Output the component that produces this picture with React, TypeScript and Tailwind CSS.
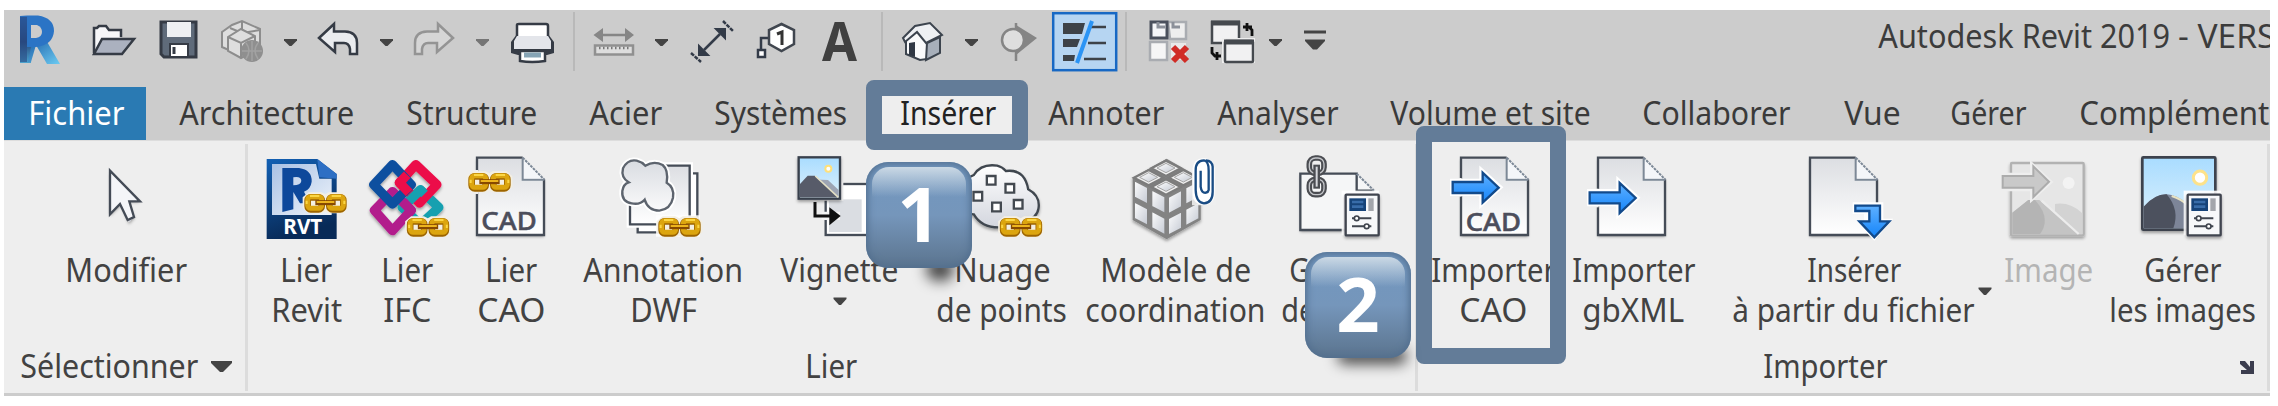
import { useLayoutEffect, useRef, useState, type ReactNode } from "react";

const FONT = "font-['Noto_Sans','Open_Sans',sans-serif]";

/* Text squeezed or stretched horizontally to fill the width given in its class. */
function Fit({ className = "", children }: { className?: string; children: ReactNode }) {
  const outer = useRef<HTMLSpanElement>(null);
  const inner = useRef<HTMLSpanElement>(null);
  const [scale, setScale] = useState(1);
  useLayoutEffect(() => {
    if (outer.current && inner.current) {
      setScale(outer.current.clientWidth / inner.current.offsetWidth);
    }
  }, []);
  return (
    <span ref={outer} className={`block h-10 shrink-0 whitespace-nowrap leading-10 ${className}`}>
      <span ref={inner} className="inline-block origin-left" style={{ transform: `translateX(1.3px) scaleX(${scale})` }}>
        {children}
      </span>
    </span>
  );
}

/* Drawing with its own coordinate window; k = drawing units per pixel. */
function Pic({ x, y, w, h, k = 1, children }: { x: number; y: number; w: number; h: number; k?: number; children: ReactNode }) {
  return (
    <svg className="block shrink-0" width={w / k} height={h / k} viewBox={`${x} ${y} ${w} ${h}`}>
      {children}
    </svg>
  );
}

function Q({ x, w, children }: { x: number; w: number; children: ReactNode }) {
  return <Pic x={x} y={10} w={w} h={64}>{children}</Pic>;
}

function Big({ x, y = 36, children }: { x: number; y?: number; children: ReactNode }) {
  return <Pic x={x} y={y} w={288} h={288} k={3}>{children}</Pic>;
}

function Caret({ dim = false }: { dim?: boolean }) {
  return (
    <svg className="block shrink-0" width="36" height="64" viewBox="0 0 36 64">
      <path d="M12 29h13v1.500l-5.500 5.500h-2l-5.500-5.500z" fill={dim ? "#757575" : "#444"} />
    </svg>
  );
}

function Rule({ x, w, at }: { x: number; w: number; at: number }) {
  return <Q x={x} w={w}><path d={`M${at} 12v59`} stroke="#b9b9b9" strokeWidth="2" /></Q>;
}

function Chain({ x, y }: { x: number; y: number }) {
  return (
    <g transform={`translate(${x} ${y})`} fill="none">
      <path d="M14 -1H52L64 5L74 -1H116L133 14V46L116 62H72L64 57L52 62H14L-4 46V14Z" fill="#f4efe2" />
      <rect x="11" y="14" width="42" height="36" rx="9" stroke="#9d6500" strokeWidth="20" />
      <rect x="76" y="14" width="42" height="36" rx="9" stroke="#9d6500" strokeWidth="20" />
      <rect x="11" y="12" width="42" height="35" rx="9" stroke="#dca50f" strokeWidth="15" />
      <rect x="76" y="12" width="42" height="35" rx="9" stroke="#dca50f" strokeWidth="15" />
      <path d="M18 10H46M83 10H111M8 24V34M121 24V34" stroke="#fbd645" strokeWidth="6" />
      <path d="M34 30H95" stroke="#874900" strokeWidth="15" />
      <path d="M38 28H91" stroke="#edb51e" strokeWidth="6" />
    </g>
  );
}

function Grads() {
  return (
    <svg width="0" height="0" className="absolute">
      <defs>
        <linearGradient id="paper" x1="0" y1="0" x2="0" y2="1"><stop offset="0" stopColor="#dcdee2" /><stop offset="1" stopColor="#fff" /></linearGradient>
        <linearGradient id="silver" x1="0" y1="0" x2="1" y2="1"><stop offset="0" stopColor="#fff" /><stop offset="1" stopColor="#c3c8d2" /></linearGradient>
        <linearGradient id="cloud" x1="0" y1="0" x2="0" y2="1"><stop offset="0" stopColor="#fff" /><stop offset="1" stopColor="#d3d6de" /></linearGradient>
        <linearGradient id="puff" x1="0" y1="0" x2="0" y2="1"><stop offset="0" stopColor="#d9dce1" /><stop offset="1" stopColor="#fafafb" /></linearGradient>
        <linearGradient id="sky" x1="0" y1="0" x2="0" y2="1"><stop offset="0" stopColor="#a9dcff" /><stop offset="1" stopColor="#dff2fc" /></linearGradient>
        <linearGradient id="rvt" x1="0" y1="0" x2="0.3" y2="1"><stop offset="0" stopColor="#1260b4" /><stop offset="1" stopColor="#082a57" /></linearGradient>
        <linearGradient id="rvtpage" x1="0" y1="0" x2="1" y2="1"><stop offset="0" stopColor="#a9c1e4" /><stop offset="1" stopColor="#eef4fb" /></linearGradient>
        <linearGradient id="blue" x1="0" y1="0" x2="0" y2="1"><stop offset="0" stopColor="#5eb0ff" /><stop offset="1" stopColor="#1585fa" /></linearGradient>
        <linearGradient id="leg" x1="0" y1="0" x2="1" y2="1"><stop offset="0" stopColor="#1c5fa8" /><stop offset="1" stopColor="#6ccbf2" /></linearGradient>
        <linearGradient id="stem" x1="0" y1="0" x2="0" y2="1"><stop offset="0" stopColor="#2a6fbe" /><stop offset="0.55" stopColor="#26477c" /><stop offset="1" stopColor="#4ba3cf" /></linearGradient>
        <filter id="drop" x="-20%" y="-20%" width="140%" height="150%"><feDropShadow dx="0" dy="6" stdDeviation="4" floodOpacity="0.35" /></filter>
      </defs>
    </svg>
  );
}

/* Folded-corner sheet, 206 x 236. */
function Sheet({ x, y }: { x: number; y: number }) {
  return (
    <g transform={`translate(${x} ${y})`}>
      <path d="M3 4H140L204 68V234H3Z" fill="url(#paper)" filter="url(#drop)" />
      <path d="M204 68V235H3V3H140" fill="none" stroke="#454c57" strokeWidth="7" />
      <path d="M140 3V69H205" fill="#f6f7f9" stroke="#7c8896" strokeWidth="6" />
      <path d="M140 3L205 69" stroke="#7c8896" strokeWidth="6" strokeDasharray="8 3" />
      <path d="M144 14L195 65H144Z" fill="#f4f6f9" />
    </g>
  );
}

function CadText({ x, y }: { x: number; y: number }) {
  return <text x={x} y={y} fontSize="75" textLength="166" lengthAdjust="spacingAndGlyphs" fontWeight="500" fill="#4c4e5c" stroke="#4c4e5c" strokeWidth="1.5" fontFamily="Noto Sans, sans-serif">CAD</text>;
}

function Arrow({ x, y }: { x: number; y: number }) {
  return (
    <g transform={`translate(${x} ${y})`}>
      <path d="M2 33H90V2L145 52L90 102V71H2Z" fill="#fff" stroke="#fff" strokeWidth="14" />
      <path d="M3 36H93V8L141 53L93 98V69H3Z" fill="url(#blue)" stroke="#124a8b" strokeWidth="7" />
    </g>
  );
}

function Props({ x, y }: { x: number; y: number }) {
  return (
    <g transform={`translate(${x} ${y})`}>
      <rect x="-9" y="-9" width="112" height="134" fill="#fff" opacity="0.9" />
      <rect x="3" y="3" width="99" height="122" rx="2" fill="#f7f8fa" stroke="#40454f" strokeWidth="7" filter="url(#drop)" />
      <rect x="14" y="14" width="50" height="38" fill="#164379" />
      <path d="M22 25H56M22 39H56" stroke="#386ca9" strokeWidth="8" />
      <rect x="71" y="14" width="16" height="38" fill="#a3a6ac" />
      <path d="M22 74H80M22 98H80" stroke="#40454f" strokeWidth="6" />
      <circle cx="36" cy="74" r="7" fill="#fff" stroke="#40454f" strokeWidth="5" />
      <circle cx="66" cy="98" r="7" fill="#fff" stroke="#40454f" strokeWidth="5" />
    </g>
  );
}

function Cube() {
  const faces: ReactNode[] = [];
  for (const r of [0, 1]) {
    for (const c of [0, 1]) {
      const tx = 198 + (c - r) * 52;
      const ty = 58 + (c + r) * 28;
      faces.push(<path key={`t${r}${c}`} d={`M${tx} ${ty + 4}l44 23l-44 23l-44-23z`} fill="#efefef" stroke="#7c7c7c" strokeWidth="7" />);
      faces.push(<path key={`u${r}${c}`} d={`M${tx} ${ty + 12}l27 14l-27 14l-27-14z`} fill="url(#silver)" stroke="#a4a4a4" strokeWidth="3" />);
      const lx = 98 + c * 52;
      const ly = 116 + c * 28 + r * 64;
      faces.push(<path key={`l${r}${c}`} d={`M${lx + 4} ${ly + 4}l42 22v52l-42-22z`} fill="url(#silver)" stroke="#838383" strokeWidth="6" />);
      const rx = 200 + c * 52;
      const ry = 172 - c * 28 + r * 64;
      faces.push(<path key={`r${r}${c}`} d={`M${rx + 4} ${ry - 1}l42-22v52l-42 22z`} fill="url(#silver)" stroke="#838383" strokeWidth="6" />);
    }
  }
  return <g filter="url(#drop)"><path d="M200 56L302 114V240L200 298L98 240V114Z" fill="#838383" />{faces}</g>;
}

function QuickAccess() {
  return (
    <div className="flex h-16 overflow-hidden">
      <Q x={4} w={76}>
        <path d="M20 16h11v47h-11z" fill="url(#stem)" />
        <path d="M32 42L46 40L60 64H47L36 45L31 62H28Z" fill="url(#leg)" />
        <path d="M20 15.500H38Q54 18 54 31Q53 45 36 47H27V16Z" fill="#2b74c5" />
        <path d="M31 25H37Q42 27 42 32Q42 37 36 38H31Z" fill="#ccc" />
        <path d="M20 17H27V62H20Z" fill="#294a82" opacity="0.6" />
      </Q>
      <Q x={80} w={68}>
        <path d="M94 53V28H97L99 26H106L109 30H121V37" fill="#f6f6f8" stroke="#353b45" strokeWidth="2.500" />
        <path d="M94 54L102 39H134L122 54Z" fill="#abb1bf" stroke="#353b45" strokeWidth="2.500" />
      </Q>
      <Q x={148} w={60}>
        <path d="M161 22H196V57H164L161 54Z" fill="#5f6b7a" stroke="#353b45" strokeWidth="3" />
        <rect x="167" y="22" width="24" height="15" fill="#eef0f3" />
        <path d="M170 56V44H188V56" fill="#fff" stroke="#353b45" strokeWidth="2" />
        <path d="M174 47V54" stroke="#353b45" strokeWidth="3" />
      </Q>
      <Q x={208} w={64}>
        <g fill="#dedede" stroke="#8d8d8d" strokeWidth="2">
          <path d="M222 32L232 25L242 21L260 29V46L242 56L222 47Z" />
          <path d="M230 28L242 33V22M242 33L260 30" fill="none" />
          <path d="M228 37L241 29L255 36V51L241 58L228 51Z" />
          <path d="M228 37L241 43L255 36M241 43V58" fill="none" />
        </g>
        <circle cx="252" cy="51" r="11" fill="#8f8f8f" />
        <path d="M242 51H262M252 41V61M246 43Q252 50 246 59M258 43Q252 50 258 59" fill="none" stroke="#a2a2a2" strokeWidth="1.500" />
      </Q>
      <Caret />
      <Q x={308} w={60}>
        <path d="M319 38L334 24V31.500H345Q357 32 357 43V54H350V49Q349 43 344 43H335V52Z" fill="#eaecef" stroke="#353b45" strokeWidth="2.500" />
      </Q>
      <Caret />
      <Q x={404} w={60}>
        <path d="M453 38L438 24V31.500H427Q415 32 415 43V54H422V49Q423 43 428 43H437V52Z" fill="#d6d6d6" stroke="#949494" strokeWidth="2.500" />
      </Q>
      <Caret dim />
      <Q x={500} w={66}>
        <path d="M511 42L517 34H548L554 42V53L547 55H518L511 53Z" fill="#353b45" />
        <path d="M517 37V25Q517 24 519 24H546Q548 24 548 26V37" fill="#fff" stroke="#353b45" strokeWidth="2.500" />
        <path d="M514 41L517 36H548L551 41V49H514Z" fill="#e3e5ea" />
        <path d="M520 51H545V61Q532 63 520 61Z" fill="#fff" stroke="#353b45" strokeWidth="2.500" />
        <path d="M524 55H541" stroke="#86a4b5" strokeWidth="5" />
      </Q>
      <Rule x={566} w={16} at={574} />
      <Q x={582} w={61}>
        <path d="M598 35H630" stroke="#868686" strokeWidth="2.500" />
        <path d="M593.500 35L603 28V42ZM634 35L625 28V42Z" fill="#868686" />
        <rect x="595" y="45.500" width="38" height="9" fill="#ddd" stroke="#909090" strokeWidth="2.500" />
        <path d="M599 48H631" stroke="#777" strokeWidth="2.500" strokeDasharray="1.500 2.500" />
      </Q>
      <Caret />
      <Q x={679} w={66}>
        <path d="M704 50L720 34" stroke="#333b48" strokeWidth="2.500" />
        <path d="M699 46V55H708ZM716 29H725V38Z" fill="#333b48" stroke="#333b48" strokeWidth="2" />
        <path d="M691 53L701 62M723 21L733 31" stroke="#333b48" strokeWidth="2.500" strokeDasharray="4 1" />
      </Q>
      <Q x={745} w={63}>
        <path d="M761 51V38H769" fill="none" stroke="#333b48" strokeWidth="2.500" />
        <rect x="758" y="50" width="7" height="7" fill="#fff" stroke="#333b48" strokeWidth="2.500" />
        <path d="M781.500 24L794 30V44L781.500 51L769 44V30Z" fill="#fff" stroke="#40464f" strokeWidth="2.500" />
        <path d="M777 34L782 32V45" fill="none" stroke="#333" strokeWidth="3" />
      </Q>
      <Q x={808} w={66}>
        <text x="822" y="61" fontFamily="Noto Sans, sans-serif" fontSize="53" fontWeight="700" fill="#404040" textLength="35" lengthAdjust="spacingAndGlyphs">A</text>
      </Q>
      <Rule x={874} w={16} at={882} />
      <Q x={890} w={63}>
        <path d="M906 39L918 31L927 42V59L920 60L906 54Z" fill="#f9fafb" stroke="#3c444e" strokeWidth="2" />
        <path d="M927 43L940 37V53L926 60Z" fill="#a7afba" stroke="#3c444e" strokeWidth="2" />
        <path d="M903 38L915 26L930 23L942 35L926 43L917 32L905 42Z" fill="#eef0f3" stroke="#3c444e" strokeWidth="2" />
        <path d="M909 43L915 42V57L909 55Z" fill="#303844" />
      </Q>
      <Caret />
      <Q x={989} w={59}>
        <path d="M1016 23V61" stroke="#858585" strokeWidth="2.500" />
        <path d="M1016 25L1037 38L1016 55Z" fill="#858585" />
        <circle cx="1013" cy="40" r="11" fill="#dedede" stroke="#858585" strokeWidth="2.500" />
      </Q>
      <Q x={1048} w={73}>
        <rect x="1053.200" y="13.200" width="63" height="57" fill="#b6d5f2" stroke="#1768c4" strokeWidth="2.500" />
        <path d="M1063 23H1085L1082 34H1063ZM1063 39H1080L1077 47H1063ZM1063 55H1075L1074 61H1063Z" fill="#3d4248" />
        <path d="M1091 27H1106M1088 43H1106M1084 59H1106" stroke="#3d4248" strokeWidth="2.500" />
        <path d="M1092 21L1077 63" stroke="#2b94f5" strokeWidth="4" />
      </Q>
      <Rule x={1121} w={11} at={1126} />
      <Q x={1132} w={68}>
        <path d="M1168 22H1186V39H1170Z" fill="#eee" stroke="#a9acb1" strokeWidth="2.500" />
        <path d="M1150 42H1167V60H1150Z" fill="#f6f6f6" stroke="#a9acb1" strokeWidth="2.500" />
        <path d="M1171 43H1186V60H1171Z" fill="#e9e9e9" />
        <path d="M1151 22H1167V38H1151Z" fill="#f5f6f8" stroke="#4a505c" strokeWidth="3" />
        <path d="M1158 22V27H1165M1173 22V27H1180" stroke="#8b9099" strokeWidth="3" fill="none" />
        <path d="M1173 47L1187 61M1187 47L1173 61" stroke="#d02c26" strokeWidth="6" />
      </Q>
      <Q x={1200} w={57}>
        <rect x="1212" y="22" width="27" height="21" fill="#f1f1f2" stroke="#45494e" strokeWidth="2.500" />
        <path d="M1211 23H1240" stroke="#45494e" strokeWidth="5" />
        <rect x="1222" y="38" width="33" height="25" fill="#eee" />
        <rect x="1225" y="41" width="28" height="21" rx="1" fill="#f1f1f2" stroke="#45494e" strokeWidth="2.500" />
        <path d="M1224 42H1254" stroke="#45494e" strokeWidth="5" />
        <path d="M1252 36V30L1249 27M1243 27H1252M1247 23V31" fill="none" stroke="#111" strokeWidth="2.800" />
        <path d="M1212 47V53L1215 56H1221M1217 52V60" fill="none" stroke="#111" strokeWidth="2.800" />
      </Q>
      <Caret />
      <Q x={1293} w={50}>
        <path d="M1304 32H1326" stroke="#444" strokeWidth="3" />
        <path d="M1305 39.500H1325V41L1317 49.500H1313L1305 41Z" fill="#444" />
      </Q>
      <div className="ml-[534px] flex pt-[5px] text-[33.500px] text-[#3c3c3c]">
        <Fit className="w-[292px]">Autodesk Revit 2019</Fit>
        <span className="ml-[9px] whitespace-nowrap leading-10">- VERSION</span>
      </div>
    </div>
  );
}

function Tabs() {
  return (
    <div className="mt-[13px] flex h-[53px] overflow-hidden text-[33.500px] text-[#3a3a3a]">
      <div className="flex w-[142px] shrink-0 justify-center bg-[#2a7ab3] pt-[5px] text-white"><Fit className="w-24">Fichier</Fit></div>
      <Fit className="mt-[5px] ml-8 w-[175px]">Architecture</Fit>
      <Fit className="mt-[5px] ml-[52px] w-[131px]">Structure</Fit>
      <Fit className="mt-[5px] ml-[52px] w-[73px]">Acier</Fit>
      <Fit className="mt-[5px] ml-[52px] w-[133px]">Systèmes</Fit>
      <div className="ml-[36px] flex w-[130px] shrink-0 justify-center bg-[#eee] pt-[5px] text-[#222]"><Fit className="w-24">Insérer</Fit></div>
      <Fit className="mt-[5px] ml-[35px] w-[116px]">Annoter</Fit>
      <Fit className="mt-[5px] ml-[53px] w-[121px]">Analyser</Fit>
      <Fit className="mt-[5px] ml-[52px] w-[200px]">Volume et site</Fit>
      <Fit className="mt-[5px] ml-[52px] w-[148px]">Collaborer</Fit>
      <Fit className="mt-[5px] ml-[54px] w-14">Vue</Fit>
      <Fit className="mt-[5px] ml-[50px] w-[76px]">Gérer</Fit>
      <Fit className="mt-[5px] ml-[53px] w-[205px]">Compléments</Fit>
    </div>
  );
}

function Tool({ width, icon, children }: { width: string; icon: ReactNode; children: ReactNode }) {
  return (
    <div className={`flex shrink-0 flex-col items-center ${width}`}>
      {icon}
      <div className="flex flex-col items-center pt-px">{children}</div>
    </div>
  );
}

const down = (
  <svg className="block" width="14" height="9" viewBox="0 0 14 9"><path d="M0.500 0.500H13.500V2L8 8H6L0.500 2Z" fill="#444" /></svg>
);

function Divider() {
  return <div className="mt-[3px] h-[247px] w-[3px] shrink-0 bg-[#dcdcdc]" />;
}

const PUFF = "M755 190Q724 185 727 153Q730 132 746 127Q722 112 729 85Q743 57 770 62Q786 66 796 77Q822 61 848 75Q866 90 860 128Q884 142 879 173Q872 207 838 212Q804 212 794 179Q780 195 755 190Z";

function Ribbon() {
  return (
    <div className="flex h-[253px] border-t border-[#ddd] bg-[#eee] text-[33.500px] text-[#424242]">
      <section className="flex w-[241px] shrink-0 flex-col pt-[11px]">
        <div className="flex h-[193px]">
          <Tool width="w-[242px]" icon={
            <Big x={231}>
              <path d="M330 94L420 181H384L404 228L387 247L364 190L330 222Z" fill="url(#silver)" filter="url(#drop)" />
              <path d="M330 92V223L360 192L383 240L402 231L388 184H420Z" fill="#f4f5f8" stroke="#444b56" strokeWidth="7" />
            </Big>
          }>
            <Fit className="w-[122px]">Modifier</Fit>
          </Tool>
        </div>
        <div className="flex items-center pl-[15px]">
          <Fit className="w-[178px]">Sélectionner</Fit>
          <svg className="ml-[14px] mt-1 block" width="21" height="12" viewBox="0 0 21 12"><path d="M0 0H21V2L12 11H9L0 2Z" fill="#444" /></svg>
        </div>
      </section>
      <Divider />
      <section className="flex w-[1167px] shrink-0 flex-col pt-[11px]">
        <div className="flex h-[193px] pl-[7px]">
          <Tool width="w-[100px]" icon={
            <Big x={771}>
              <path d="M800 57H952L1010 102V297H800Z" fill="url(#rvt)" />
              <path d="M816 72H948L958 116H995V225H816Z" fill="url(#rvtpage)" />
              <path d="M952 57L1010 102V116L958 112Z" fill="#2d6fc4" />
              <path d="M847 84H897Q937 90 935 125Q932 148 912 155L930 190H900L880 156V208L847 216Z" fill="#0d489b" />
              <path d="M880 112Q904 108 904 123Q902 136 880 136Z" fill="#c9d8ee" />
              <text x="850" y="281" fontSize="66" fontWeight="700" textLength="117" lengthAdjust="spacingAndGlyphs" fill="#fff" fontFamily="Noto Sans, sans-serif">RVT</text>
              <Chain x={912} y={158} />
            </Big>
          }>
            <Fit className="w-[52px]">Lier</Fit><Fit className="w-[71px]">Revit</Fit>
          </Tool>
          <Tool width="w-[101px]" icon={
            <Big x={-67.500}>
              <g fill="none" strokeWidth="28" strokeLinejoin="round" filter="url(#drop)">
                <path d="M120 150L175 202L120 254L65 202Z" stroke="#18a0b0" />
                <path d="M36 155L-18 211L36 272L92 211Z" stroke="#b21f8c" />
                <path d="M106 74L169 134L117 189L57 128Z" stroke="#ec0d49" />
                <path d="M36 74L-20 134L36 192L92 134Z" stroke="#0b4f9f" />
                <path d="M80 104L57 128L86 158" stroke="#ec0d49" />
                <path d="M68 184L92 211L76 230" stroke="#b21f8c" />
                <path d="M86 183L120 150L132 162" stroke="#18a0b0" />
              </g>
              <Chain x={78} y={230} />
            </Big>
          }>
            <Fit className="w-[52px]">Lier</Fit><Fit className="w-12">IFC</Fit>
          </Tool>
          <Tool width="w-[108px]" icon={
            <Big x={246}><Sheet x={288} y={50} /><CadText x={304} y={271} /><path d="M282 90V162" stroke="#eee" strokeWidth="24" /><Chain x={264} y={95} /></Big>
          }>
            <Fit className="w-[52px]">Lier</Fit><Fit className="w-[68px]">CAO</Fit>
          </Tool>
          <Tool width="w-[196px]" icon={
            <Big x={702}>
              <path d="M773 100H952V277H773Z" fill="#fff" stroke="#454c57" strokeWidth="7" />
              <path d="M750 77H929V253H750Z" fill="url(#paper)" stroke="#fff" strokeWidth="20" />
              <path d="M750 77H929V253H750Z" fill="url(#paper)" stroke="#454c57" strokeWidth="7" />
              <path d={PUFF} fill="#fff" stroke="#fff" strokeWidth="18" />
              <path d={PUFF} fill="url(#puff)" stroke="#5d646e" strokeWidth="7" />
              <path d="M828 226H960V290H828Z" fill="#fff" opacity="0.8" />
              <Chain x={834} y={230} />
            </Big>
          }>
            <Fit className="w-[160px]">Annotation</Fit><Fit className="w-[67px]">DWF</Fit>
          </Tool>
          <Tool width="w-[156px]" icon={
            <Big x={90}>
              <rect x="197" y="132" width="180" height="153" fill="#fff" stroke="#454c57" strokeWidth="7" />
              <rect x="207" y="178" width="98" height="98" fill="#dadde2" />
              <path d="M190 125H250V182H190ZM185 215H240V240H185Z" fill="#f4f4f4" />
              <rect x="116" y="52" width="124" height="124" fill="url(#sky)" stroke="#393f4b" strokeWidth="7" filter="url(#drop)" />
              <path d="M150 118L204 120L236 150V172H150Z" fill="#9da4b3" />
              <path d="M120 132L143 107L164 107L236 172H120Z" fill="#575b69" />
              <path d="M166 108L235 172" stroke="#e4e0c5" strokeWidth="5" />
              <circle cx="205" cy="86" r="9" fill="#fff" stroke="#ffe07a" strokeWidth="6" />
              <path d="M165 186V228H215" fill="none" stroke="#111" strokeWidth="9" />
              <path d="M208 202L242 228L208 256Z" fill="#111" />
            </Big>
          }>
            <Fit className="w-[118px]">Vignette</Fit><div className="pt-[8px] pl-[3px]">{down}</div>
          </Tool>
          <Tool width="w-[169px]" icon={
            <Big x={577.500}>
              <path d="M640 105Q662 70 710 77Q726 81 736 93Q793 86 803 148Q840 168 834 205Q830 235 790 245Q760 240 724 262Q665 266 640 223Q585 220 590 165Q595 125 640 105Z" fill="url(#cloud)" stroke="#40474f" strokeWidth="7" filter="url(#drop)" />
              <g fill="#fff" stroke="#434950" strokeWidth="7">
                <path d="M679 108h26v26h-26zM735 132h26v26h-26zM639 156h26v26h-26zM695 188h26v26h-26zM760 180h26v26h-26z" />
              </g>
              <Chain x={717} y={230} />
            </Big>
          }>
            <Fit className="w-[96px]">Nuage</Fit><Fit className="w-[131px]">de points</Fit>
          </Tool>
          <Tool width="w-[178px]" icon={
            <Big x={78}>
              <Cube />
              <path d="M276 60H350V196H276Z" fill="#eee" opacity="0.9" />
              <rect x="278" y="55" width="66" height="140" rx="30" fill="#fff" />
              <path d="M302 92V140Q304 160 318 158Q325 156 326 150V92Q326 62 312 61Q286 62 287 92V150Q288 188 312 190Q338 188 338 155V80Q336 62 318 61" fill="none" stroke="#194c84" strokeWidth="7" />
            </Big>
          }>
            <Fit className="w-[151px]">Modèle de</Fit><Fit className="w-[180px]">coordination</Fit>
          </Tool>
          <Tool width="w-[152px]" icon={
            <Big x={573}>
              <path d="M601 101H770L822 152V270H601Z" fill="url(#cloud)" filter="url(#drop)" />
              <path d="M601 101H770L822 152V270H601Z" fill="#f5f6f7" />
              <path d="M735 270H601V101H770V152H822" fill="none" stroke="#454c57" strokeWidth="7" />
              <path d="M770 101L822 152" stroke="#7c8896" strokeWidth="6" strokeDasharray="8 3" />
              <rect x="628" y="54" width="44" height="46" rx="18" fill="none" stroke="#4b4d52" strokeWidth="17" />
              <rect x="628" y="118" width="44" height="46" rx="18" fill="none" stroke="#4b4d52" strokeWidth="17" />
              <rect x="628" y="54" width="44" height="46" rx="18" fill="none" stroke="#c4c6ca" strokeWidth="4" />
              <rect x="628" y="118" width="44" height="46" rx="18" fill="none" stroke="#c4c6ca" strokeWidth="4" />
              <path d="M650 74V146" stroke="#4b4d52" strokeWidth="20" /><path d="M650 80V140" stroke="#d6d8dc" strokeWidth="6" />
              <Props x={734} y={161} />
            </Big>
          }>
            <Fit className="w-[102px]">Gestion</Fit><Fit className="w-[118px]">des liens</Fit>
          </Tool>
        </div>
        <div className="flex pl-[556px]"><Fit className="w-[52px]">Lier</Fit></div>
      </section>
      <Divider />
      <section className="flex w-[849px] shrink-0 flex-col pt-[11px]">
        <div className="flex h-[193px] pl-[2px]">
          <Tool width="w-[144px]" icon={
            <Big x={132} y={96}><Sheet x={180} y={110} /><CadText x={197} y={332} /><path d="M174 174V230" stroke="#eee" strokeWidth="22" /><Arrow x={155} y={150} /></Big>
          }>
            <Fit className="w-[124px]">Importer</Fit><Fit className="w-[68px]">CAO</Fit>
          </Tool>
          <Tool width="w-[136px]" icon={
            <Big x={552} y={96}><Sheet x={591} y={110} /><path d="M585 206V262" stroke="#eee" strokeWidth="22" /><Arrow x={566} y={181} /></Big>
          }>
            <Fit className="w-[123px]">Importer</Fit><Fit className="w-[102px]">gbXML</Fit>
          </Tool>
          <Tool width="w-[304px]" icon={
            <Big x={252}>
              <Sheet x={267} y={50} />
              <path d="M398 187H490V236H520L463 302L432 270V222H398Z" fill="#fff" />
              <path d="M406 197H480V244H508L463 292L418 244H448V213H406Z" fill="url(#blue)" stroke="#124a8b" strokeWidth="7" />
            </Big>
          }>
            <Fit className="ml-[2px] w-[94px]">Insérer</Fit>
            <div className="relative">
              <Fit className="w-[242px]">à partir du fichier</Fit>
              <div className="absolute top-[-2px] -right-[19px]">{down}</div>
            </div>
          </Tool>
          <Tool width="w-[86px]" icon={
            <Big x={57}>
              <rect x="93" y="69" width="218" height="217" rx="3" fill="#e6e6e6" stroke="#b2b2b2" strokeWidth="7" filter="url(#drop)" />
              <path d="M225 192Q270 185 307 220V282H225Z" fill="#d3d3d3" />
              <path d="M97 218L145 180H178L295 282H97Z" fill="#c4c4c4" />
              <path d="M97 218L145 180H165Q215 235 180 282H97Z" fill="#b4b4b4" />
              <path d="M185 182L296 282" stroke="#ececec" strokeWidth="7" />
              <circle cx="266" cy="129" r="18" fill="#f3f3f3" />
              <path d="M66 98H150V60L220 126L150 190V154H66Z" fill="#eee" />
              <path d="M68 108H160V79L207 125L160 171V143H68Z" fill="#c9c9c9" stroke="#acacac" strokeWidth="6" />
            </Big>
          }>
            <Fit className="w-[89px] text-[#b4b4b4]">Image</Fit>
          </Tool>
          <Tool width="ml-[5px] w-[172px]" icon={
            <Big x={459}>
              <rect x="487" y="52" width="219" height="217" rx="3" fill="url(#sky)" stroke="#3d434e" strokeWidth="8" filter="url(#drop)" />
              <path d="M491 200Q525 162 560 163Q590 165 620 190V265H491Z" fill="#7d8598" />
              <path d="M491 200Q525 162 560 163Q600 210 580 265H491Z" fill="#4c515e" />
              <path d="M575 168Q605 178 622 195" fill="none" stroke="#e8e2c2" strokeWidth="6" />
              <circle cx="660" cy="113" r="20" fill="#fff" stroke="#fde28a" strokeWidth="9" />
              <Props x={620} y={161} />
            </Big>
          }>
            <Fit className="w-[77px]">Gérer</Fit><Fit className="w-[147px]">les images</Fit>
          </Tool>
        </div>
        <div className="flex items-center pl-[344px]">
          <Fit className="w-[124px]">Importer</Fit>
          <svg className="mt-1 ml-[354px] block" width="15" height="14" viewBox="0 0 15 14">
            <path d="M0 1H5L10 7V1H14V14H1V10H7L0 4Z" fill="#3b3d4e" />
          </svg>
        </div>
      </section>
      <Divider />
    </div>
  );
}

function Badge({ place, shadow, children }: { place: string; shadow: string; children: ReactNode }) {
  return (
    <div className={`absolute size-[106px] ${place}`}>
      <div className={`absolute rounded-full bg-black/70 blur-[7px] ${shadow}`} />
      <div className="relative flex size-full items-center justify-center rounded-[22px] bg-linear-to-b from-[#7297bf] via-[#7596bb] to-[#5b748e] shadow-[inset_0_0_7px_2px_#526f8f]">
        <div className="absolute inset-x-[6px] top-[5px] h-[30px] rounded-t-[17px] bg-linear-to-b from-[#cbd9e5] to-transparent" />
        <span className="relative -top-[2px] font-['Open_Sans'] text-[76px] leading-none font-bold text-white">{children}</span>
      </div>
    </div>
  );
}

export default function App() {
  return (
    <div className={`relative h-[406px] w-[2278px] overflow-hidden bg-white pt-[10px] pl-1 ${FONT}`}>
      <Grads />
      <main className="h-[386px] w-[2266px] overflow-hidden border-b-[3px] border-[#ccc] bg-[#ccc]">
        <QuickAccess />
        <Tabs />
        <Ribbon />
      </main>
      <div className="absolute top-[80px] left-[866px] h-[70px] w-[162px] rounded-[8px] border-[16px] border-[#637c98]" />
      <div className="absolute top-[126px] left-[1416px] h-[238px] w-[150px] rounded-[8px] border-[16px] border-[#637c98]" />
      <Badge place="top-[162px] left-[866px]" shadow="bottom-[-13px] left-[60px] h-6 w-7">1</Badge>
      <Badge place="top-[252px] left-[1305px]" shadow="bottom-[-6px] left-8 h-4 w-[70px]">2</Badge>
    </div>
  );
}
